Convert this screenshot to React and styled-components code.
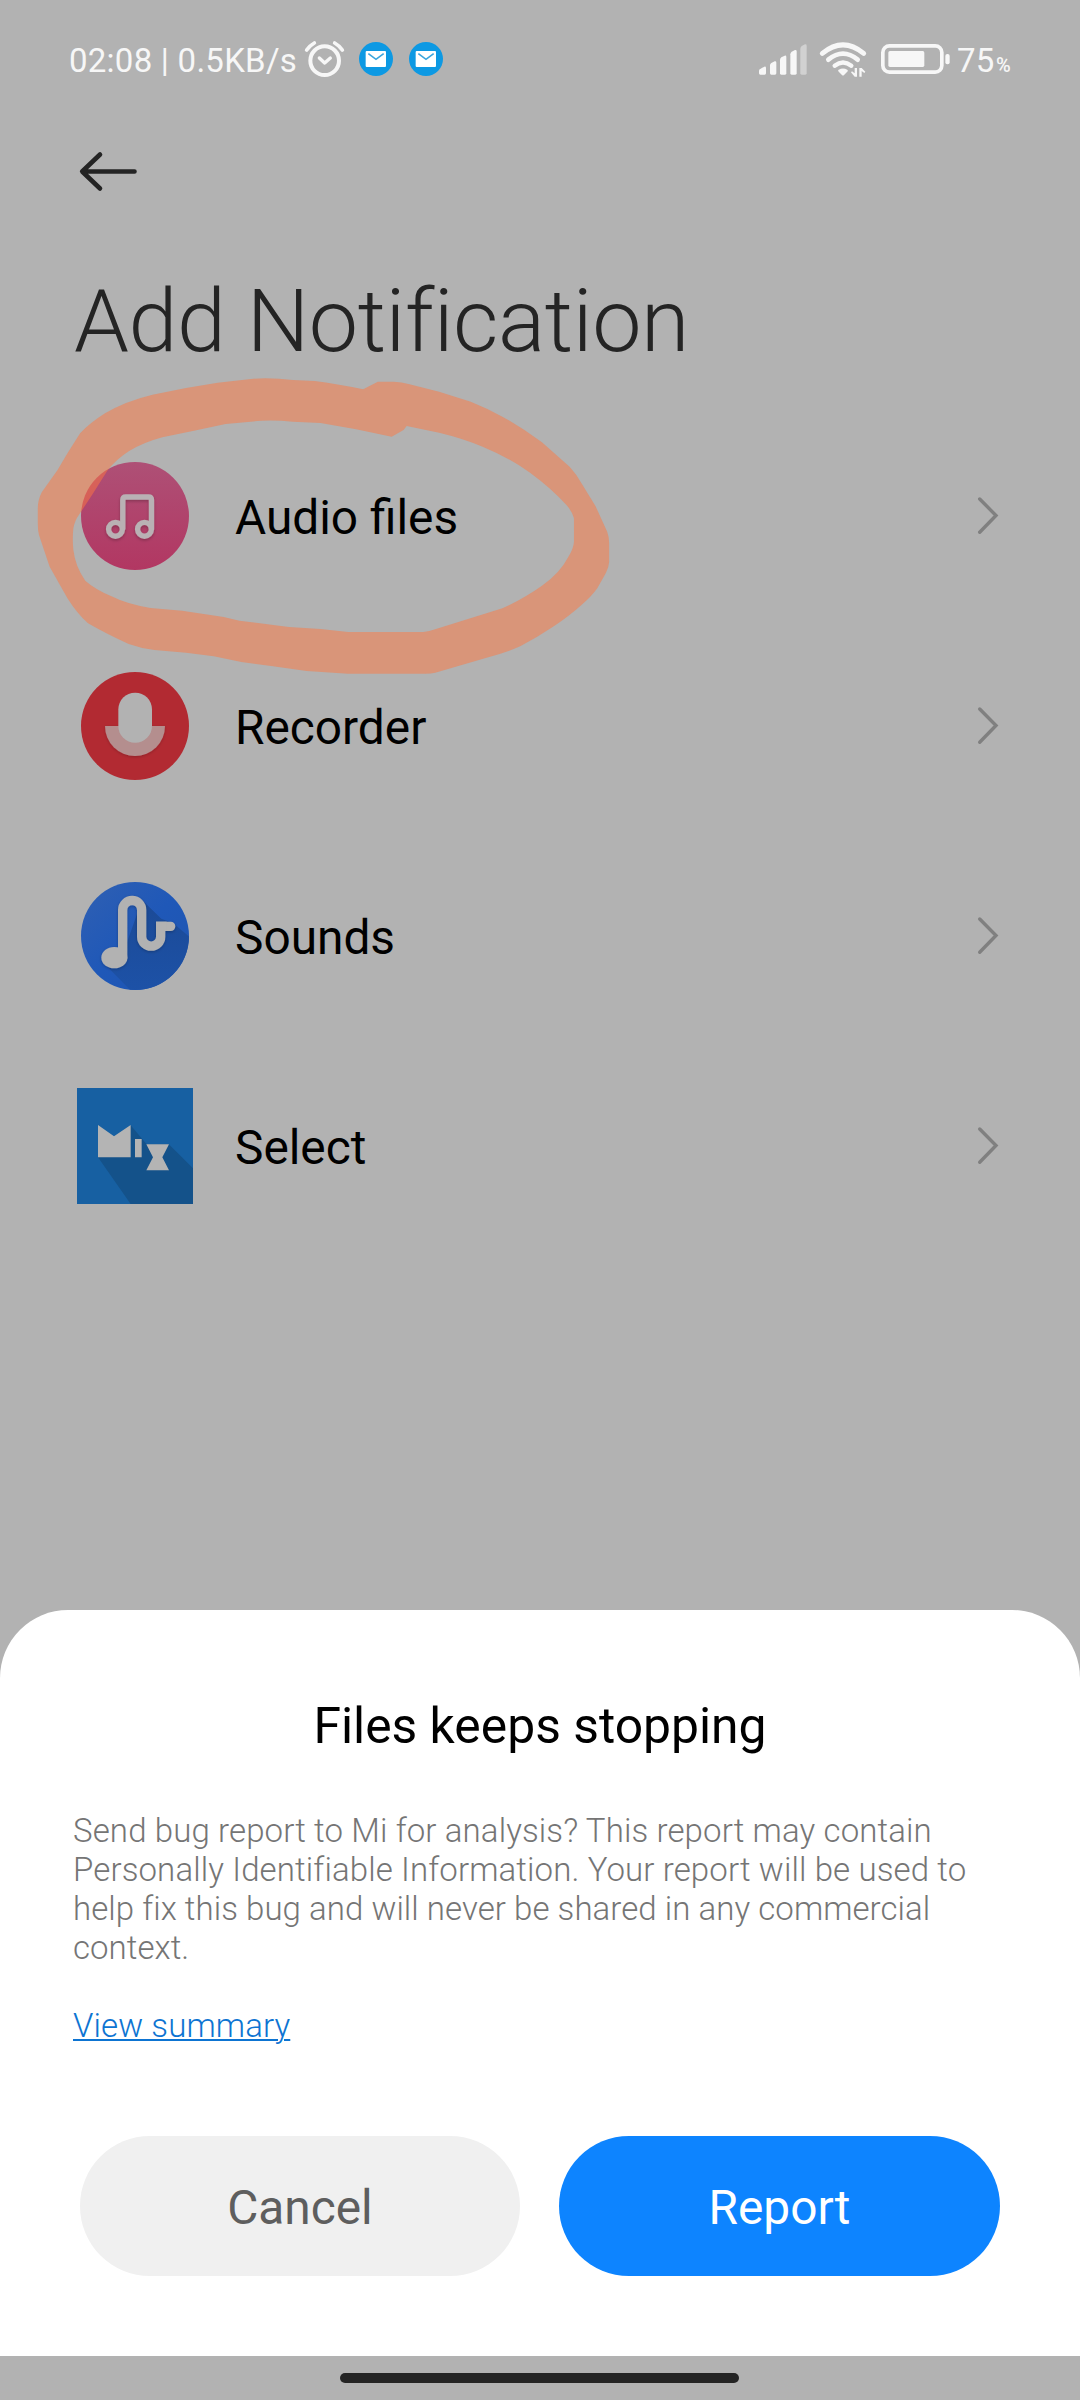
import React from 'react';
import styled, { createGlobalStyle } from 'styled-components';

const GlobalStyle = createGlobalStyle`
  * { box-sizing: border-box; }
  html, body { margin: 0; padding: 0; background: #b2b2b2; }
  body { font-family: Roboto, 'Noto Sans', sans-serif; }
`;

const Screen = styled.div`
  position: relative;
  width: 1080px;
  height: 2400px;
  display: flex;
  flex-direction: column;
  background: #b2b2b2;
  overflow: hidden;
`;

const StatusBar = styled.header`
  height: 118px;
  padding: 0 66px 0 69px;
  display: flex;
  align-items: center;
  justify-content: space-between;
  color: #f7f7f7;
`;

const StatusGroup = styled.div`
  display: flex;
  align-items: center;
`;

const StatusText = styled.span`
  font-size: 33px;
  line-height: 40px;
  letter-spacing: 0.25px;
  padding-top: 3px;
  white-space: pre;
  width: ${(p) => p.$width}px;
`;

const BatteryLevel = styled(StatusText)`
  padding-left: 7px;
`;

const Percent = styled.span`
  font-size: 20px;
  font-weight: 500;
  line-height: 24px;
  padding-top: 12px;
  width: 18px;
`;

const Glyph = styled.svg`
  display: block;
  flex: none;
  width: ${(p) => p.$w}px;
  height: ${(p) => p.$h}px;
  margin-left: ${(p) => p.$ml || 0}px;
  overflow: visible;
`;

const Toolbar = styled.nav`
  height: 108px;
  padding: 0 77px;
  display: flex;
  align-items: center;
`;

const BackButton = styled.button`
  border: 0;
  padding: 0;
  background: none;
`;

const Title = styled.h1`
  margin: 0;
  height: 185px;
  padding: 43px 0 0 74px;
  font-size: 88px;
  font-weight: 300;
  line-height: 104px;
  letter-spacing: -0.4px;
  font-variant-ligatures: common-ligatures;
  color: #242424;
  white-space: nowrap;
`;

const List = styled.ul`
  list-style: none;
  margin: 0;
  padding: 0;
`;

const Row = styled.li`
  height: 210px;
  padding: 0 82px 0 77px;
  display: flex;
  align-items: center;
`;

const IconSlot = styled.span`
  width: 116px;
  height: 116px;
  flex: none;
`;

const RowLabel = styled.span`
  flex: 1;
  margin-left: 42px;
  padding-top: 3px;
  font-size: 47.8px;
  line-height: 56px;
  color: #000;
`;

const Marker = styled.svg`
  position: absolute;
  left: 20px;
  top: 360px;
  width: 620px;
  height: 330px;
  pointer-events: none;
`;

const Sheet = styled.section`
  margin-top: auto;
  height: 746px;
  background: #fff;
  border-radius: 68px 68px 0 0;
  padding: 0 73px;
`;

const SheetTitle = styled.h2`
  margin: 0;
  padding-top: 86px;
  text-align: center;
  font-size: 49.8px;
  font-weight: 400;
  line-height: 60px;
  color: #000;
`;

const SheetText = styled.p`
  margin: 0;
  padding-top: 55px;
  font-size: 33px;
  font-weight: 300;
  line-height: 39px;
  font-variant-ligatures: common-ligatures;
  color: #757575;
  white-space: nowrap;
`;

const Line = styled.span`
  display: block;
  letter-spacing: ${(p) => p.$tracking}px;
`;

const SummaryLink = styled.a`
  display: block;
  margin-top: 39px;
  font-size: 33px;
  font-weight: 300;
  line-height: 39px;
  letter-spacing: 0.11px;
  color: #0d74d2;
  text-decoration: underline;
  text-decoration-thickness: 2px;
  text-underline-offset: 2px;
`;

const Actions = styled.div`
  display: grid;
  grid-template-columns: 440px 441px;
  column-gap: 39px;
  padding: 91px 7px 0;
`;

const ActionButton = styled.button`
  height: 140px;
  border: 0;
  border-radius: 70px;
  padding: 3px 0 0;
  font-family: inherit;
  font-size: 47.8px;
  font-weight: 400;
  background: ${(p) => (p.$primary ? '#0d84ff' : '#f0f0f0')};
  color: ${(p) => (p.$primary ? '#fff' : '#5e5e5e')};
`;

const HomeArea = styled.footer`
  height: 44px;
  display: flex;
  justify-content: center;
  padding: 17px 1px 0 0;
`;

const HomeBar = styled.div`
  width: 399px;
  height: 10px;
  border-radius: 5px;
  background: #242424;
`;

const AlarmIcon = () => (
  <Glyph $w={39} $h={36} $ml={0} viewBox="765 62 117 108" fill="none" stroke="#f7f7f7" strokeLinecap="round" strokeLinejoin="round">
    <circle cx="824" cy="121" r="43" strokeWidth="12" />
    <path d="M770 89Q779 76 793 68M877 89Q868 76 854 68" strokeWidth="11" />
    <path d="M808 113L824 128L841 113" strokeWidth="10" />
  </Glyph>
);

const MailIcon = ({ gap }) => (
  <Glyph $w={34} $h={34} $ml={gap} viewBox="927 66 102 102">
    <circle cx="978" cy="117" r="51" fill="#0d99e3" />
    <rect x="947" y="93" width="61" height="48" rx="3" fill="#fff" />
    <path d="M955 101L978 118L1001 101" fill="none" stroke="#3aa5dd" strokeWidth="5" />
  </Glyph>
);

const SignalIcon = () => (
  <Glyph $w={48} $h={31} viewBox="57 73 144 93" fill="#f7f7f7">
    <path d="M57 153Q57 149 62 147L73 141Q78 140 78 145V161Q78 165 74 165H61Q57 165 57 161Z" />
    <path d="M90 137Q90 132 94 130L104 125Q109 124 109 129V161Q109 165 105 165H94Q90 165 90 161Z" />
    <path d="M120 121Q120 116 124 113L134 108Q139 107 139 112V161Q139 165 135 165H124Q120 165 120 161Z" />
    <path d="M151 104Q151 99 155 96L165 91Q170 90 170 95V161Q170 165 166 165H155Q151 165 151 161Z" />
    <path d="M181 87Q181 82 185 79L195 74Q200 73 200 78V161Q200 165 196 165H185Q181 165 181 161Z" fillOpacity="0.45" />
  </Glyph>
);

const WifiIcon = () => (
  <Glyph $w={46} $h={35} $ml={13} viewBox="240 67 138 105" fill="#f7f7f7" stroke="#f7f7f7">
    <path d="M247 101Q309 50 371 101" fill="none" strokeWidth="15" strokeLinecap="round" />
    <path d="M265 120Q309 84 353 120" fill="none" strokeWidth="14" strokeLinecap="round" />
    <path d="M284 138Q309 119 334 138" fill="none" strokeWidth="13" strokeLinecap="round" />
    <path d="M298 153Q309 147 320 153L309 164Z" strokeWidth="7" strokeLinejoin="round" />
    <path d="M344 145H351V171H344L333 158L336 155L344 161ZM358 145H365L376 156L373 160L365 154V171H358Z" stroke="none" />
  </Glyph>
);

const BatteryIcon = () => (
  <Glyph $w={69} $h={30} $ml={15} viewBox="422 72 207 90">
    <rect x="427.500" y="77.500" width="177" height="79" rx="20" fill="none" stroke="#f7f7f7" strokeWidth="11" />
    <rect x="444" y="93" width="108" height="48" rx="5" fill="#f7f7f7" />
    <rect x="615" y="102" width="13" height="31" rx="6" fill="#f7f7f7" />
  </Glyph>
);

const BackIcon = () => (
  <Glyph $w={64} $h={48} viewBox="77 148 64 48" fill="none" stroke="#242424" strokeWidth="4.6" strokeLinecap="round" strokeLinejoin="round">
    <path d="M134.500 171.500H82.500M100 154.500L82.200 171.500L100 188.500" />
  </Glyph>
);

const Chevron = () => (
  <Glyph $w={20} $h={38} viewBox="978 496.500 20 38" fill="none" stroke="#808080" strokeWidth="3.400" strokeLinecap="round" strokeLinejoin="miter">
    <path d="M979.700 498.500L996 515L979.700 531.700" />
  </Glyph>
);

const AudioIcon = () => (
  <Glyph $w={116} $h={116} viewBox="77 458 116 116">
    <defs>
      <linearGradient id="audioBg" x1="0" y1="0" x2="0" y2="1">
        <stop offset="0" stopColor="#ae5076" />
        <stop offset="1" stopColor="#b23762" />
      </linearGradient>
      <filter id="softShadow" x="-20%" y="-20%" width="140%" height="150%">
        <feDropShadow dx="0" dy="1.5" stdDeviation="1.500" floodOpacity="0.25" />
      </filter>
    </defs>
    <circle cx="135" cy="516" r="54" fill="url(#audioBg)" />
    <g fill="none" stroke="#b9b1b4" strokeWidth="5.400" filter="url(#softShadow)">
      <circle cx="115.500" cy="529.300" r="6.900" />
      <circle cx="144.500" cy="529.300" r="6.900" />
      <path d="M122.800 529.500V500Q122.800 497 125.800 497H148.500Q151.500 497 151.500 500V529.500" />
    </g>
  </Glyph>
);

const RecorderIcon = () => (
  <Glyph $w={116} $h={116} viewBox="51 54 348 348">
    <defs>
      <filter id="micShadow" x="-20%" y="-20%" width="140%" height="140%">
        <feDropShadow dx="0" dy="3" stdDeviation="4" floodOpacity="0.2" />
      </filter>
    </defs>
    <circle cx="225" cy="228" r="162" fill="#b22a32" />
    <path d="M135 228H315A90 90 0 0 1 135 228Z" fill="#b48e8e" filter="url(#micShadow)" />
    <rect x="175" y="128" width="101" height="150" rx="50" fill="#b2b2b2" />
  </Glyph>
);

const SoundsIcon = () => (
  <Glyph $w={116} $h={116} viewBox="51 684 348 348">
    <defs>
      <linearGradient id="soundBg" x1="0" y1="0" x2="1" y2="1">
        <stop offset="0" stopColor="#3060b2" />
        <stop offset="0.5" stopColor="#1f58b8" />
        <stop offset="1" stopColor="#1f55b0" />
      </linearGradient>
      <linearGradient id="soundShade" x1="0" y1="0" x2="0" y2="1">
        <stop offset="0" stopColor="#1b4a96" />
        <stop offset="1" stopColor="#1d52a8" />
      </linearGradient>
      <clipPath id="soundClip"><circle cx="225" cy="858" r="162" /></clipPath>
      <filter id="noteShadow" x="-20%" y="-20%" width="140%" height="140%">
        <feDropShadow dx="0" dy="3" stdDeviation="4" floodOpacity="0.25" />
      </filter>
    </defs>
    <circle cx="225" cy="858" r="162" fill="url(#soundBg)" />
    <path d="M246 750L304 806L340 820L400 870V1040H230L134 942L200 880Z" fill="url(#soundShade)" clipPath="url(#soundClip)" />
    <g filter="url(#noteShadow)">
      <path d="M188 925V780A28.500 28.500 0 0 1 245 780V860A28.500 28.500 0 0 0 302 860V829H332" fill="none" stroke="#b2b2b2" strokeWidth="28" strokeLinecap="round" />
      <path d="M288 815H320V843H288Z" fill="#b2b2b2" />
      <ellipse cx="163" cy="923" rx="39" ry="32" fill="#b2b2b2" />
    </g>
  </Glyph>
);

const SelectIcon = () => (
  <Glyph $w={116} $h={116} viewBox="51 84 348 348">
    <rect x="51" y="84" width="348" height="348" fill="#1760a2" />
    <path d="M212 196L260 253L326 252L399 325V432H212L114 292Z" fill="#14528a" />
    <path d="M114 195L162 229L212 195V292H114ZM225 237H245V292H225ZM259 253H327L307 292L327 331H259L279 292Z" fill="#b4b4b4" />
  </Glyph>
);

const items = [
  { label: 'Audio files', Icon: AudioIcon },
  { label: 'Recorder', Icon: RecorderIcon },
  { label: 'Sounds', Icon: SoundsIcon },
  { label: 'Select', Icon: SelectIcon },
];

export default function App() {
  return (
    <>
      <GlobalStyle />
      <Screen>
        <StatusBar>
          <StatusGroup>
            <StatusText $width={236}>02:08 | 0.5KB/s</StatusText>
            <AlarmIcon />
            <MailIcon gap={15} />
            <MailIcon gap={16} />
          </StatusGroup>
          <StatusGroup>
            <SignalIcon />
            <WifiIcon />
            <BatteryIcon />
            <BatteryLevel $width={46}>75</BatteryLevel>
            <Percent>%</Percent>
          </StatusGroup>
        </StatusBar>
        <Toolbar>
          <BackButton aria-label="Back"><BackIcon /></BackButton>
        </Toolbar>
        <Title>Add Notification</Title>
        <List>
          {items.map(({ label, Icon }) => (
            <Row key={label}>
              <IconSlot><Icon /></IconSlot>
              <RowLabel>{label}</RowLabel>
              <Chevron />
            </Row>
          ))}
        </List>
        <Sheet>
          <SheetTitle>Files keeps stopping</SheetTitle>
          <SheetText>
            <Line $tracking={0.12}>Send bug report to Mi for analysis? This report may contain</Line>
            <Line $tracking={0.12}>Personally Identifiable Information. Your report will be used to</Line>
            <Line $tracking={0.05}>help fix this bug and will never be shared in any commercial</Line>
            <Line $tracking={0.05}>context.</Line>
          </SheetText>
          <SummaryLink>View summary</SummaryLink>
          <Actions>
            <ActionButton>Cancel</ActionButton>
            <ActionButton $primary>Report</ActionButton>
          </Actions>
        </Sheet>
        <HomeArea><HomeBar /></HomeArea>
        <Marker viewBox="0 0 1568 990" preserveAspectRatio="none">
          <path
            fill="#ff7840"
            fillOpacity="0.5"
            fillRule="evenodd"
            d="M868 88L905 65H945Q965 66 985 73L1060 95L1140 125Q1180 144 1220 170Q1270 203 1320 247L1390 320Q1408 343 1420 370L1455 437L1485 515Q1490 530 1490 550V605Q1489 622 1482 638L1460 685Q1445 710 1420 735Q1390 767 1350 799Q1310 831 1265 859Q1225 880 1180 893L1050 938Q1040 941 1025 941H830L725 933L640 919L560 906L490 889L420 878L340 870Q305 865 275 852Q225 826 172 790Q145 762 120 715L75 620L48 525Q45 510 45 490V445Q45 420 55 397L95 330L120 280L152 220Q175 190 215 160Q265 124 335 104L420 84L500 68L590 56Q640 53 690 60L745 63Q800 71 868 88ZM978 198L970 210L940 230L850 208L760 189L690 185Q650 180 610 182L520 192L440 212L360 232Q310 248 275 274Q245 297 222 330L185 400L150 463Q138 483 135 505Q132 535 135 570Q140 620 165 662Q190 688 230 708Q270 732 330 744L410 752L515 771L555 782L680 801L760 807L830 816H1020Q1035 814 1050 808L1220 745Q1275 715 1320 677Q1365 640 1387 590Q1400 565 1401 545V475Q1397 455 1382 435Q1345 386 1290 338Q1235 292 1170 260Q1120 235 1060 218Z"
          />
        </Marker>
      </Screen>
    </>
  );
}
